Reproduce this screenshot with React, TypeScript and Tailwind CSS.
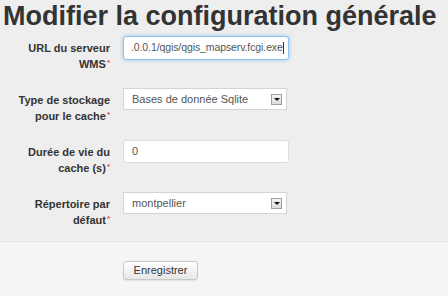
import React from "react";

const Req = () => (
  <span className="text-[#e0484b] text-[8px] align-top relative top-[-1px] ml-[1px]">*</span>
);

const Label = ({ l1, l2 }: { l1: string; l2: string }) => (
  <div className="w-[110px] shrink-0 text-right font-bold text-[11px] leading-[16px] text-[#333] pt-[4px]">
    <div>{l1}</div>
    <div>
      {l2}
      <Req />
    </div>
  </div>
);

const Arrow = () => (
  <div className="w-[11px] h-[11px] border border-[#a0a0a0] bg-gradient-to-b from-[#f4f4f4] to-[#dcdcdc] flex items-center justify-center">
    <div className="w-0 h-0 border-l-[3px] border-r-[3px] border-t-[3px] border-l-transparent border-r-transparent border-t-[#111]" />
  </div>
);

export default function App() {
  return (
    <div
      className="w-[448px] h-[296px] bg-[#eeeeee] overflow-hidden flex flex-col"
      style={{ fontFamily: '"Liberation Sans", Arial, sans-serif' }}
    >
      <h1 className="text-[27px] leading-[30px] font-bold text-[#333] pl-[3px] pt-[1px] whitespace-nowrap">
        Modifier la configuration générale
      </h1>
      <div className="flex flex-col gap-[16px] pt-[5px] h-[210px]">
        <div className="flex gap-[13px]">
          <Label l1="URL du serveur" l2="WMS" />
          <div className="w-[166px] h-[24px] bg-white border border-[#8fc1ec] rounded-[3px] shadow-[0_0_4px_rgba(102,175,233,0.6)] flex items-center pl-[7px] text-[10.5px] tracking-[-0.1px] text-[#555] overflow-hidden whitespace-nowrap">
            .0.0.1/qgis/qgis_mapserv.fcgi.exe
            <span className="inline-block w-[1px] h-[12px] bg-[#333]" />
          </div>
        </div>
        <div className="flex gap-[13px]">
          <Label l1="Type de stockage" l2="pour le cache" />
          <div className="w-[164px] h-[22px] bg-white border border-[#d4d4d4] flex items-center justify-between pl-[8px] pr-[4px] text-[11px] text-[#555]">
            <span>Bases de donnée Sqlite</span>
            <Arrow />
          </div>
        </div>
        <div className="flex gap-[13px]">
          <Label l1="Durée de vie du" l2="cache (s)" />
          <div className="w-[166px] h-[23px] bg-white border border-[#dcdcdc] rounded-[3px] flex items-center pl-[8px] text-[11px] text-[#555]">
            0
          </div>
        </div>
        <div className="flex gap-[13px]">
          <Label l1="Répertoire par" l2="défaut" />
          <div className="w-[164px] h-[22px] bg-white border border-[#d4d4d4] flex items-center justify-between pl-[8px] pr-[4px] text-[11px] text-[#555]">
            <span>montpellier</span>
            <Arrow />
          </div>
        </div>
      </div>
      <div className="flex-1 bg-[#f5f5f5] border-t border-[#e3e3e3] pl-[123px] pt-[15px]">
        <button className="w-[75px] h-[19px] rounded-[3px] border border-[#c8c8c8] bg-gradient-to-b from-white to-[#e6e6e6] text-[11px] text-[#333] leading-none shadow-[0_1px_1px_rgba(0,0,0,0.08)]">
          Enregistrer
        </button>
      </div>
    </div>
  );
}
